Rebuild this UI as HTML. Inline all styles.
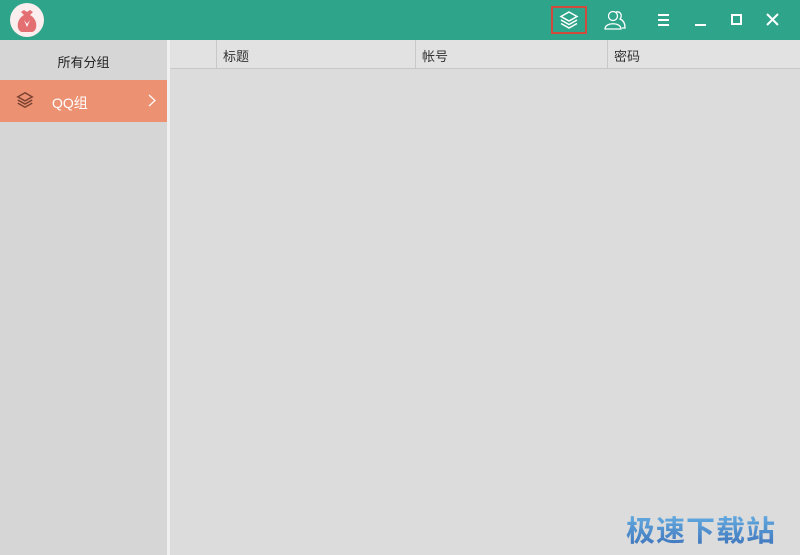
<!DOCTYPE html>
<html><head><meta charset="utf-8"><style>
*{margin:0;padding:0;box-sizing:border-box}
body{width:800px;height:555px;background:#dcdcdc;font-family:"Liberation Sans","Noto Sans CJK SC",sans-serif;position:relative;overflow:hidden;font-size:13px;color:#333}
.top{position:absolute;left:0;top:0;width:800px;height:40px;background:#2ea58a}
.side{position:absolute;left:0;top:40px;width:167px;height:515px;background:#d6d6d6}
.div{position:absolute;left:167px;top:40px;width:3px;height:515px;background:#f0f0f0}
.hdr{position:absolute;left:170px;top:40px;width:630px;height:29px;background:#e2e2e2;border-bottom:1px solid #c8c8c8}
.col{position:absolute;top:0;height:28px;border-left:1px solid #c8c8c8;padding:6px 0 0 6px}
.abs{position:absolute}
.ln{position:absolute;left:658px;width:11px;height:2px;background:#fff}
</style></head><body>
<div class="top">
 <svg class="abs" style="left:10px;top:3px" width="34" height="34" viewBox="0 0 34 34"><circle cx="17" cy="17" r="17" fill="#fbeeee"/><path d="M11 9 L14 12 L20 12 L23 9 L20 7 L17 9 L14 7Z" fill="#e36f72"/><path d="M14 12 C6 16 6 28 12 29 L22 29 C28 28 28 16 20 12Z" fill="#e36f72"/><path d="M14 17 L17 24 L20 17 L17 21Z" fill="#fff"/></svg>
 <div class="abs" style="left:551px;top:6px;width:36px;height:28px;border:2px solid #d24a3c"></div>
 <svg class="abs" style="left:559px;top:10px" width="20" height="20" viewBox="0 0 20 20" fill="none" stroke="#fff" stroke-width="1.5"><path d="M10 2 L18 6.5 L10 11 L2 6.5Z"/><path d="M2 10 L10 14.5 L18 10"/><path d="M2 13.5 L10 18 L18 13.5"/></svg>
 <svg class="abs" style="left:603px;top:9px" width="24" height="22" viewBox="0 0 24 22" fill="none" stroke="#fff" stroke-width="1.3"><circle cx="10" cy="7" r="4.5"/><path d="M2 20 C2 13 18 13 18 20Z"/><path d="M13 3 C17 2 20 6 17 10 C20 11 22 14 22 19 L19 19"/></svg>
 <div class="ln" style="top:14px"></div><div class="ln" style="top:19px"></div><div class="ln" style="top:24px"></div>
 <div class="abs" style="left:695px;top:24px;width:11px;height:2px;background:#fff"></div>
 <div class="abs" style="left:731px;top:14px;width:11px;height:11px;border:2px solid #fff"></div>
 <svg class="abs" style="left:766px;top:13px" width="13" height="13" viewBox="0 0 13 13" stroke="#fff" stroke-width="2"><path d="M1 1L12 12M12 1L1 12"/></svg>
</div>
<div class="side">
 <div class="abs" style="left:0;top:0;width:167px;height:38px;text-align:center;padding-top:12px;color:#222">所有分组</div>
 <div class="abs" style="left:0;top:40px;width:167px;height:42px;background:#ec9172"></div>
 <svg class="abs" style="left:16px;top:51px" width="18" height="18" viewBox="0 0 20 20" fill="none" stroke="#7a4030" stroke-width="1.6"><path d="M10 2 L18 6.5 L10 11 L2 6.5Z"/><path d="M2 10 L10 14.5 L18 10"/><path d="M2 13.5 L10 18 L18 13.5"/></svg>
 <div class="abs" style="left:52px;top:53px;color:#fff;font-size:14px">QQ组</div>
 <svg class="abs" style="left:148px;top:54px" width="8" height="13" viewBox="0 0 8 13" fill="none" stroke="#fff" stroke-width="1.2"><path d="M1 1L7 6.5L1 12"/></svg>
</div>
<div class="div"></div>
<div class="hdr">
 <div class="col" style="left:46px">标题</div>
 <div class="col" style="left:245px">帐号</div>
 <div class="col" style="left:437px">密码</div>
</div>
<div class="abs" style="left:626px;top:508px;font-size:29px;font-weight:bold;background:linear-gradient(#6cb7e8,#3a6fb8);-webkit-background-clip:text;color:transparent;letter-spacing:1px">极速下载站</div>
</body></html>
